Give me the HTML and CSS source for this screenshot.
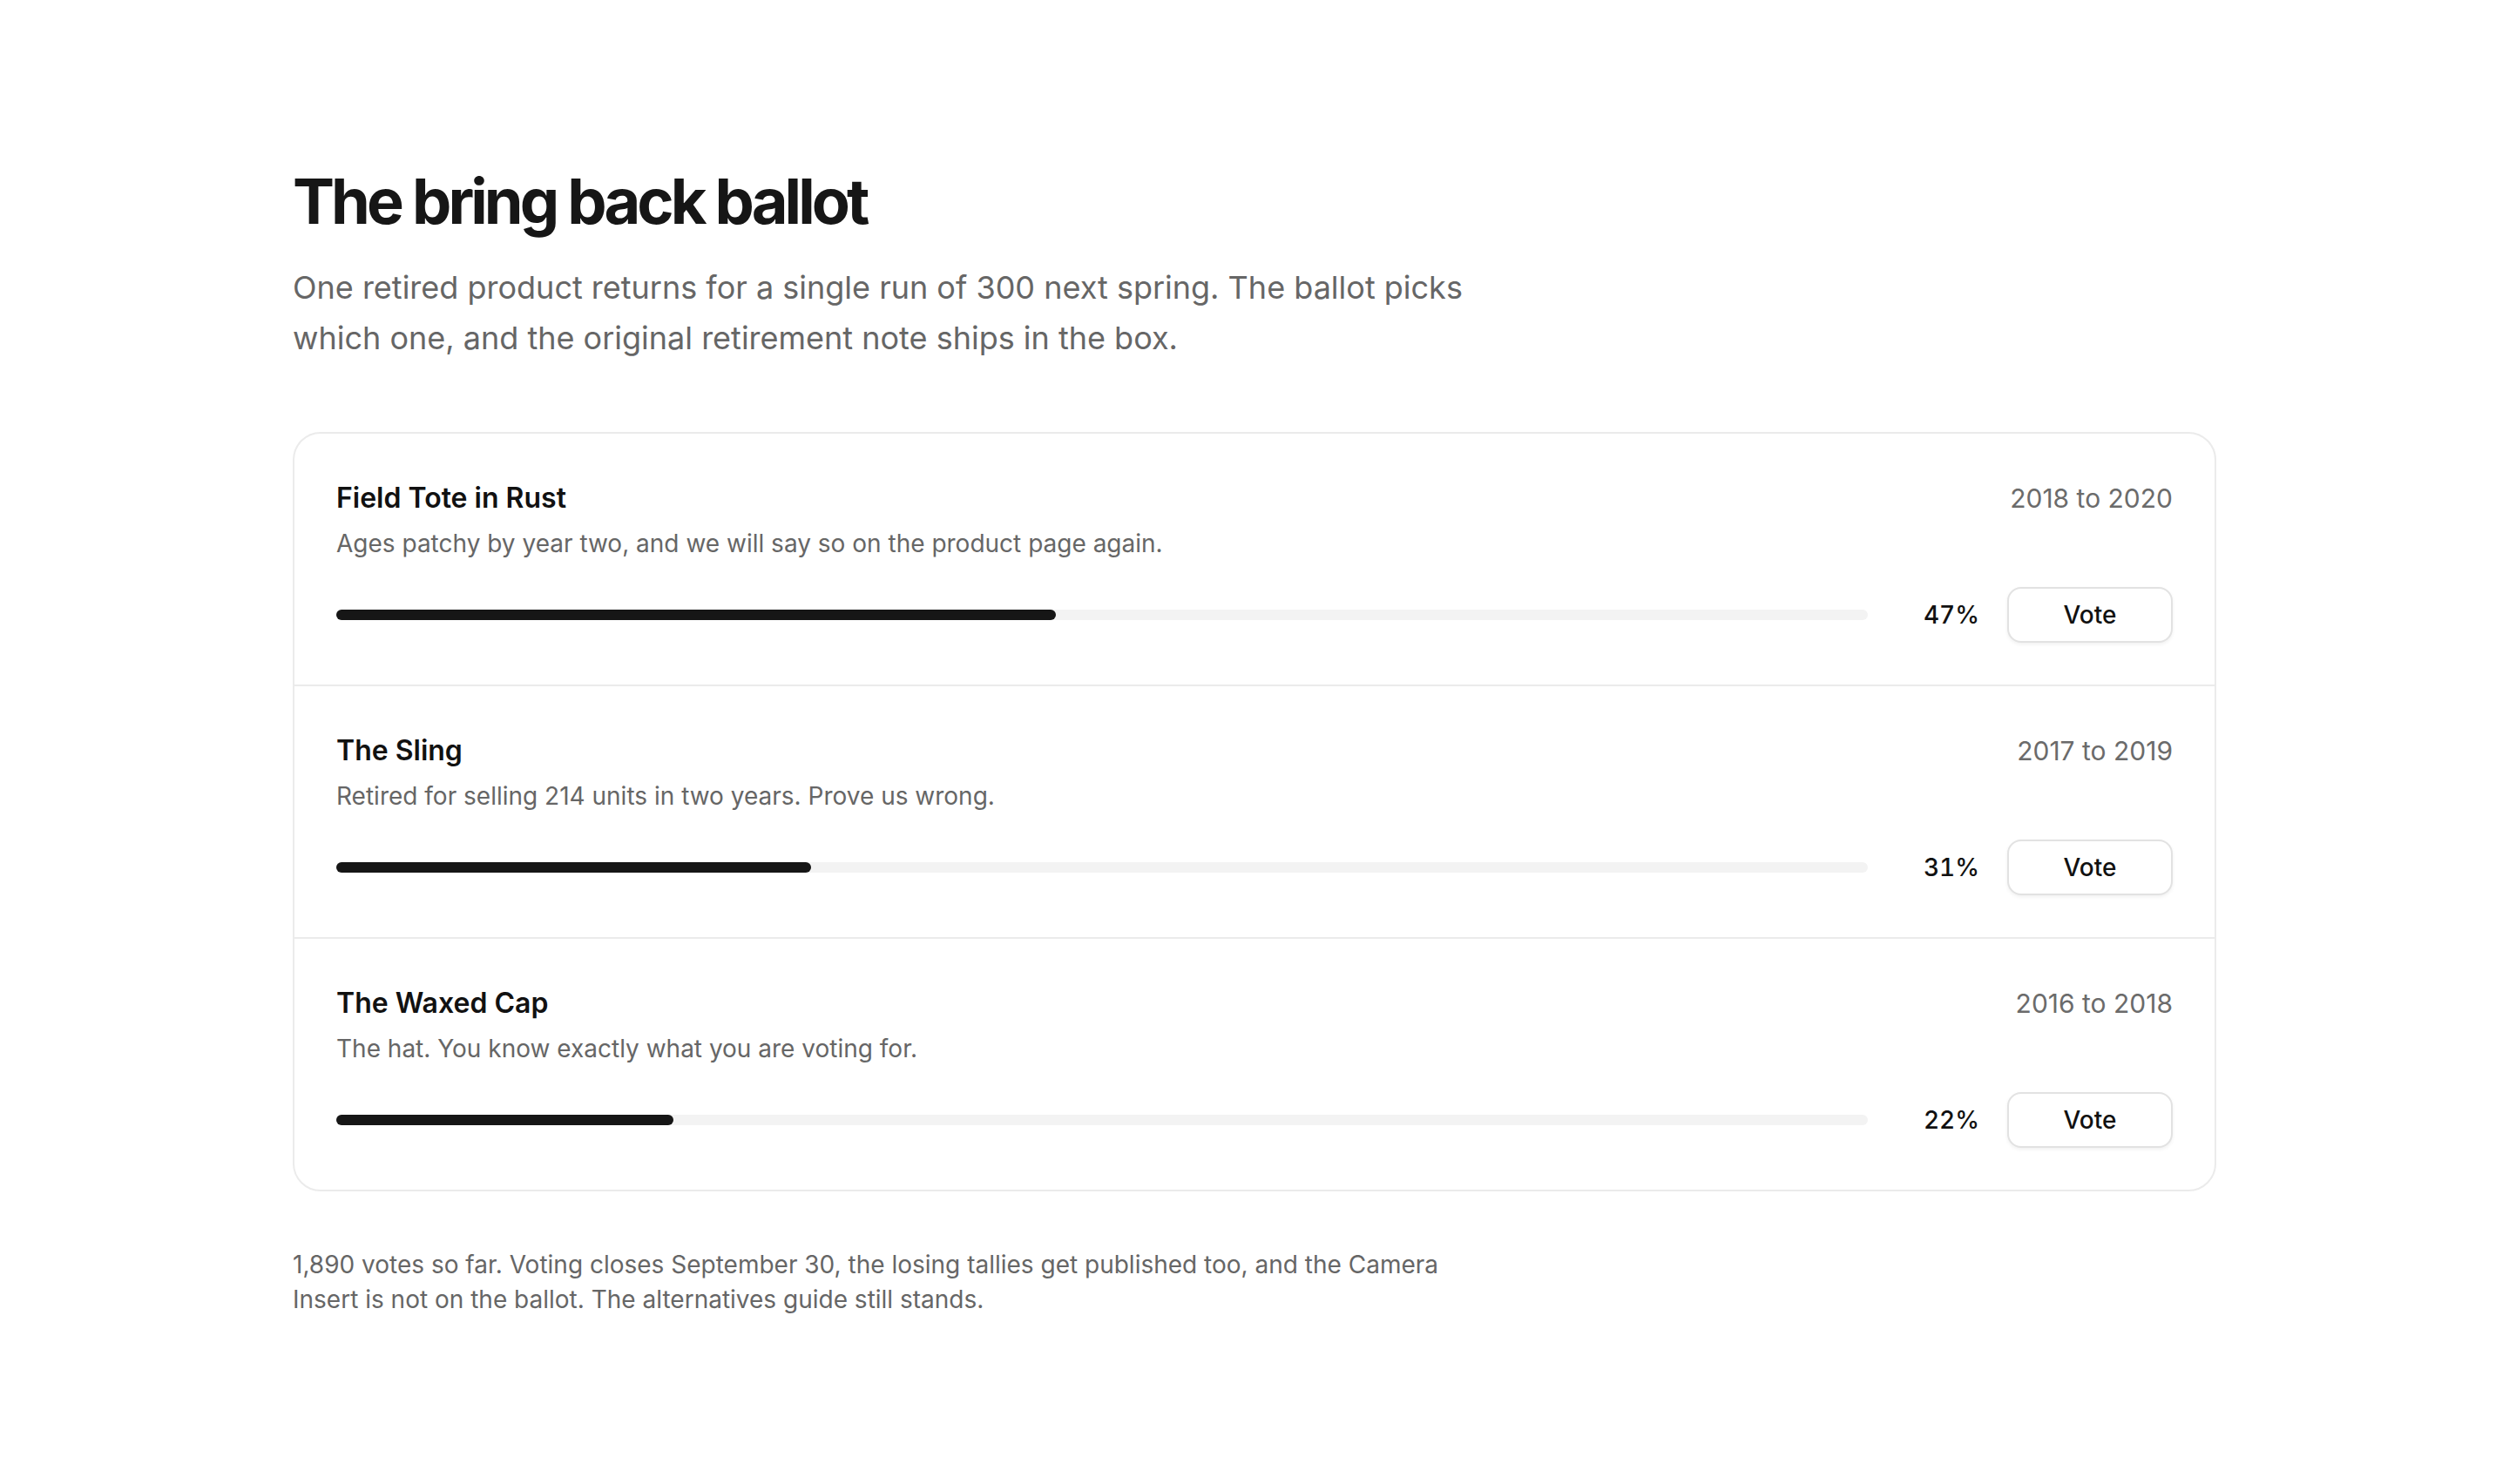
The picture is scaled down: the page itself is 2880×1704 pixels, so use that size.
FILE: index.html
```html
<!DOCTYPE html>
<html lang="en">
<head>
    <meta charset="UTF-8">
    <meta name="viewport" content="width=device-width, initial-scale=1.0">
    <title>The bring back ballot</title>
    <link rel="stylesheet" href="styles.css">
</head>
<body>
    <main class="page">
        <h1 class="page-title">The bring back ballot</h1>
        <p class="lede">One retired product returns for a single run of 300 next spring. The ballot picks which one, and the original retirement note ships in the box.</p>

        <ul class="ballot">
            <li class="option">
                <div class="option-head">
                    <h2 class="option-name">Field Tote in Rust</h2>
                    <span class="option-years">2018 to 2020</span>
                </div>
                <p class="option-note">Ages patchy by year two, and we will say so on the product page again.</p>
                <div class="tally">
                    <div class="bar"><div class="bar-fill" style="width: 47%"></div></div>
                    <span class="pct">47%</span>
                    <button type="button" class="vote">Vote</button>
                </div>
            </li>
            <li class="option">
                <div class="option-head">
                    <h2 class="option-name">The Sling</h2>
                    <span class="option-years">2017 to 2019</span>
                </div>
                <p class="option-note">Retired for selling 214 units in two years. Prove us wrong.</p>
                <div class="tally">
                    <div class="bar"><div class="bar-fill" style="width: 31%"></div></div>
                    <span class="pct">31%</span>
                    <button type="button" class="vote">Vote</button>
                </div>
            </li>
            <li class="option">
                <div class="option-head">
                    <h2 class="option-name">The Waxed Cap</h2>
                    <span class="option-years">2016 to 2018</span>
                </div>
                <p class="option-note">The hat. You know exactly what you are voting for.</p>
                <div class="tally">
                    <div class="bar"><div class="bar-fill" style="width: 22%"></div></div>
                    <span class="pct">22%</span>
                    <button type="button" class="vote">Vote</button>
                </div>
            </li>
        </ul>

        <p class="footnote">1,890 votes so far. Voting closes September 30, the losing tallies get published too, and the Camera Insert is not on the ballot. The alternatives guide still stands.</p>
    </main>
</body>
</html>
```

FILE: styles.css
```css
body {
    margin: 0;
    font-family: Inter, "Noto Sans", sans-serif;
    background-color: #fff;
    color: #161616;
}
.page {
    max-width: 2208px;
    margin: 0 auto;
    padding: 188px 96px 160px;
}
.page-title {
    margin: 0;
    font-size: 72px;
    line-height: 1.2;
    font-weight: 700;
    letter-spacing: -0.055em;
    color: #161616;
}
.lede {
    max-width: 1360px;
    margin: 28px 0 78px;
    font-size: 36px;
    line-height: 1.6;
    color: #666;
}
.ballot {
    list-style: none;
    margin: 0;
    padding: 0;
    border: 2px solid #ebebeb;
    border-radius: 32px;
}
.option {
    padding: 50px 48px 48px;
    border-bottom: 2px solid #ebebeb;
}
.option:last-child {
    border-bottom: none;
}
.option-head {
    display: flex;
    justify-content: space-between;
    align-items: baseline;
}
.option-name {
    margin: 0;
    font-size: 32px;
    line-height: 48px;
    font-weight: 600;
    color: #111;
}
.option-years {
    font-size: 30px;
    color: #6b6b6b;
}
.option-note {
    margin: 8px 0 0;
    font-size: 28px;
    line-height: 40px;
    color: #666;
}
.tally {
    display: flex;
    align-items: center;
    gap: 32px;
    margin-top: 30px;
}
.bar {
    flex: 1;
    height: 12px;
    border-radius: 6px;
    background-color: #f3f3f3;
}
.bar-fill {
    height: 100%;
    border-radius: 6px;
    background-color: #161616;
}
.pct {
    width: 96px;
    text-align: right;
    font-size: 28px;
    font-weight: 500;
    font-variant-numeric: tabular-nums;
    color: #111;
}
.vote {
    width: 190px;
    height: 64px;
    font-family: inherit;
    font-size: 28px;
    font-weight: 500;
    color: #111;
    background-color: #fff;
    border: 2px solid #e2e2e2;
    border-radius: 16px;
    box-shadow: 0 2px 4px rgba(0, 0, 0, 0.06);
    cursor: pointer;
}
.vote:hover {
    background-color: #f7f7f7;
}
.footnote {
    max-width: 1320px;
    margin: 64px 0 0;
    font-size: 28px;
    line-height: 40px;
    color: #666;
}
```
